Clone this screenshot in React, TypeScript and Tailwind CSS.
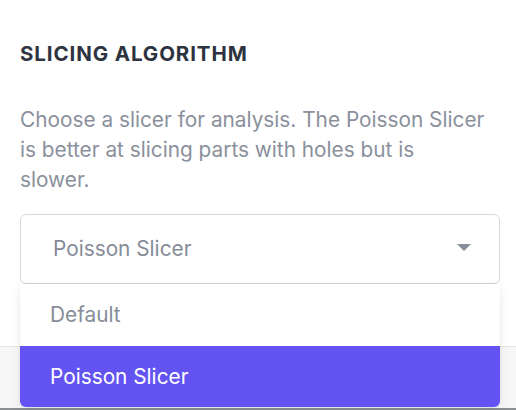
import React from 'react';

const options = ['Default', 'Poisson Slicer'];

export default function App() {
  const selected = 'Poisson Slicer';

  return (
    <div className="w-[516px] h-[410px] bg-white flex flex-col overflow-hidden" style={{ fontFamily: 'Inter, "Noto Sans", sans-serif' }}>
      <div className="relative h-[346px] shrink-0 px-5 pt-[40px]">
        <h3 className="text-[20.5px] leading-7 font-bold tracking-[0.9px] text-[#2d3340] uppercase">Slicing Algorithm</h3>
        <p className="mt-[37px] w-[472px] text-[20.8px] leading-[30px] text-[#8a909c]">
          Choose a slicer for analysis. The Poisson Slicer is better at slicing parts with holes but is
          <br />
          slower.
        </p>

        {/* select */}
        <div className="relative mt-[19px]">
          <div className="h-[70px] w-[480px] rounded-md border border-[#d5d8dd] flex items-center justify-between pl-8 pr-7">
            <span className="text-[20.8px] text-[#868c98]">{selected}</span>
            <svg width="14" height="8" viewBox="0 0 14 8" className="mt-[-2px]">
              <path d="M0 0 L14 0 L7 7 Z" fill="#868c98" />
            </svg>
          </div>

          {/* open menu */}
          <ul className="absolute left-0 top-[70px] z-10 w-[480px] bg-white rounded-b-md shadow-[0_4px_12px_rgba(0,0,0,0.08),0_0_3px_rgba(0,0,0,0.06)] overflow-hidden">
            {options.map((opt) => (
              <li
                key={opt}
                className={
                  opt === selected
                    ? 'h-[61px] flex items-center pl-[30px] text-[20.8px] bg-[#6353f2] text-white'
                    : 'h-[62px] flex items-center pl-[30px] text-[20.8px] text-[#868c98]'
                }
              >
                {opt}
              </li>
            ))}
          </ul>
        </div>
      </div>
      <div className="flex-1 bg-[#f6f6f7] border-t border-[#e3e4e6]" />
      <div className="h-[2px] bg-[#8d8e90]" />
    </div>
  );
}
